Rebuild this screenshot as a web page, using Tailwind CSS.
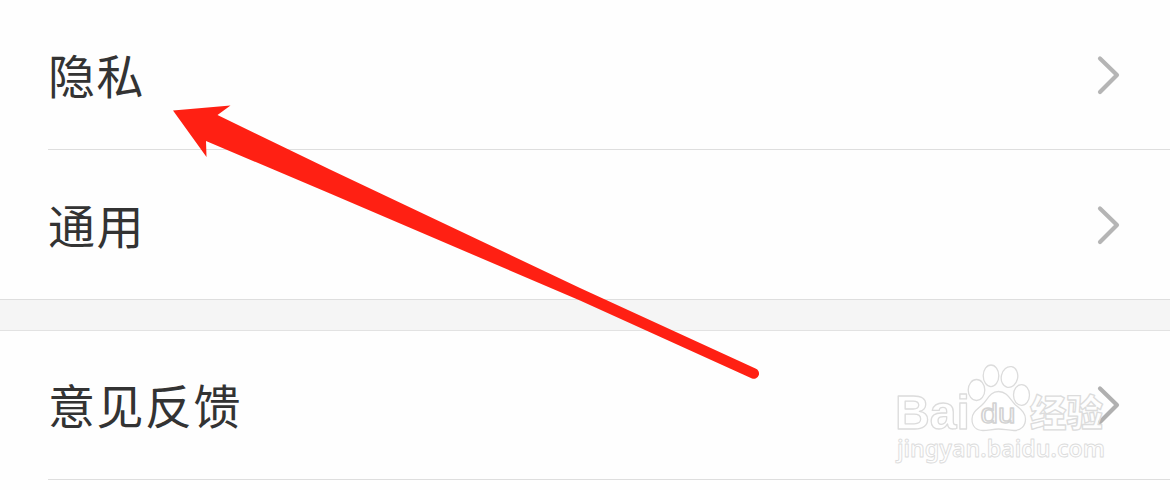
<!DOCTYPE html>
<html lang="zh-CN">
<head>
  <meta charset="UTF-8" />
  <meta name="viewport" content="width=device-width, initial-scale=1" />
  <title>设置</title>
  <script src="https://cdn.jsdelivr.net/npm/@tailwindcss/browser@4"></script>
</head>
<body class="relative h-[490px] overflow-hidden bg-[#fefefe] font-['Noto_Sans_CJK_SC',sans-serif] text-[47px] leading-none tracking-[1.5px] text-[#333333]">
  <!-- Settings list -->
  <main>
    <section>
      <a class="ml-12 flex h-[150px] items-center justify-between border-b border-[#dedede] pr-[48px]">
        <span class="pb-0.5">隐私</span>
        <svg class="h-11 w-7" viewBox="0 0 28 44" fill="none" stroke="#b5b5b5" stroke-width="4.2" stroke-linecap="round" stroke-linejoin="round"><path d="M6 5.500 23 22 6 39" /></svg>
      </a>
      <a class="flex h-[150px] items-center justify-between border-b border-[#dedede] pr-[48px] pl-12">
        <span class="pb-0.5">通用</span>
        <svg class="h-11 w-7" viewBox="0 0 28 44" fill="none" stroke="#b5b5b5" stroke-width="4.2" stroke-linecap="round" stroke-linejoin="round"><path d="M6 5.500 23 22 6 39" /></svg>
      </a>
    </section>
    <div class="h-[31px] border-b border-[#e2e2e2] bg-[#f5f5f5]"></div>
    <section>
      <a class="ml-12 flex h-[149px] items-center justify-between border-b border-[#dedede] pr-[48px]">
        <span class="pb-1">意见反馈</span>
        <svg class="h-11 w-7" viewBox="0 0 28 44" fill="none" stroke="#b0b0b0" stroke-width="4.2" stroke-linecap="round" stroke-linejoin="round"><path d="M6 5.500 23 22 6 39" /></svg>
      </a>
    </section>
  </main>

  <!-- Arrow and watermark lie over the list -->
  <svg class="absolute inset-0 h-[490px] w-[1170px] tracking-normal" viewBox="0 0 1170 490">
    <path fill="#ff2013" d="M173 110.500 230.500 105.500 217.500 115 330 169.500 580 288 755.500 368.500A5 5 0 0 1 752 378.500L580 300.500 330 193.500 206 141 206.500 157Z" />
    <g fill="#fff" fill-opacity=".5" stroke="#dcdcdc" stroke-width="1.300" stroke-linejoin="round">
      <ellipse cx="976.500" cy="390" rx="8.300" ry="10.500" />
      <ellipse cx="991" cy="375.800" rx="7.800" ry="10.800" />
      <ellipse cx="1009.500" cy="377" rx="8.200" ry="10.500" transform="rotate(12 1009.500 377)" />
      <ellipse cx="1021.500" cy="395" rx="8" ry="10.300" />
      <path d="M998.500 391.500C1007 391.500 1010 399 1015 404.500 1020 409 1025.500 412 1025.500 419 1025.500 426 1021 430.500 1014 430.500 1008 430.500 1004 429 998.500 429 993 429 988 430.500 983 430.500 976 430.500 972 426 972 419 972 412 978 409 983 404 988 399 990 391.500 998.500 391.500Z" />
      <text x="895" y="429" font-family="Liberation Sans" font-weight="700" font-size="48" textLength="75" lengthAdjust="spacingAndGlyphs">Bai</text>
      <text x="980.500" y="423" font-family="Liberation Sans" font-size="28" stroke="#d2d2d2" stroke-width="1.500" textLength="35" lengthAdjust="spacingAndGlyphs">du</text>
      <text x="1030" y="426.500" font-family="Noto Sans CJK SC" font-weight="900" font-size="37" textLength="73" lengthAdjust="spacingAndGlyphs">经验</text>
      <text x="897" y="457" font-family="Noto Sans" font-weight="600" font-size="24" stroke-width=".9" textLength="208" lengthAdjust="spacingAndGlyphs">jingyan.baidu.com</text>
    </g>
  </svg>
</body>
</html>
